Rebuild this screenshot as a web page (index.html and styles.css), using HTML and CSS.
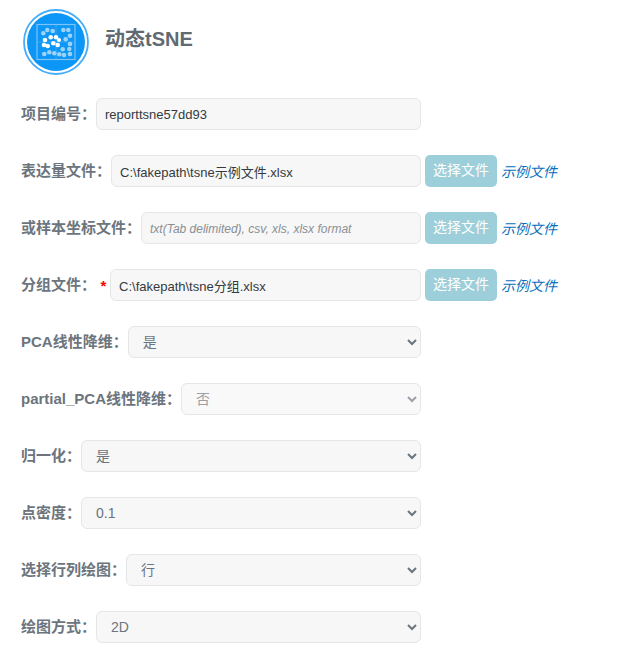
FILE: index.html
```html
<!DOCTYPE html>
<html lang="zh">
<head>
<meta charset="utf-8">
<title>动态tSNE</title>
<link rel="stylesheet" href="styles.css">
</head>
<body>
<header class="head">
<svg class="logo" viewBox="0 0 68 68" width="68" height="68">
<circle cx="34" cy="34" r="32" fill="#fff" stroke="#45adf8" stroke-width="1.800"/>
<circle cx="34" cy="34" r="29" fill="#0c96f5"/>
<rect x="15" y="16.500" width="38" height="35" fill="none" stroke="#7cc4f8" stroke-width="1.200"/>
<path d="M34 17v34M15 34h38" stroke="#4fb0f7" stroke-width="0.700"/>
<g fill="#fff">
<circle cx="23" cy="32" r="2.300"/><circle cx="28.700" cy="29.300" r="2.300"/><circle cx="34" cy="29.300" r="2.300"/><circle cx="22" cy="37" r="2.300"/><circle cx="25.700" cy="38" r="2.300"/><circle cx="31.300" cy="35.300" r="2.300"/><circle cx="35.700" cy="37" r="2.300"/><circle cx="37" cy="32" r="2.100"/>
</g>
<g fill="#9bd3fa">
<circle cx="21.300" cy="25.300" r="2.300"/><circle cx="25.300" cy="22" r="2.300"/><circle cx="30.700" cy="23" r="2.300"/><circle cx="41.300" cy="22" r="2.300"/><circle cx="46.300" cy="22" r="2.300"/><circle cx="48" cy="27.700" r="2.300"/><circle cx="43.700" cy="31.300" r="2.300"/><circle cx="40.700" cy="41.300" r="2.300"/><circle cx="48" cy="36" r="2.300"/><circle cx="47.300" cy="41" r="2.300"/><circle cx="48" cy="46" r="2.300"/><circle cx="42" cy="47" r="2.300"/><circle cx="22.300" cy="46" r="2.300"/><circle cx="27.300" cy="44.300" r="2.300"/><circle cx="32.300" cy="45.300" r="2.300"/><circle cx="37.300" cy="46.300" r="2.300"/>
</g>
</svg>
<h1 class="title">动态tSNE</h1>
</header>
<form class="form">
<div class="row"><div class="main"><label class="lbl">项目编号：</label><input class="ctl" type="text" value="reporttsne57dd93"></div></div>
<div class="row"><div class="main"><label class="lbl">表达量文件：</label><input class="ctl" type="text" value="C:\fakepath\tsne示例文件.xlsx"></div><span class="btn">选择文件</span><a class="ex" href="#">示例文件</a></div>
<div class="row"><div class="main"><label class="lbl">或样本坐标文件：</label><input class="ctl" type="text" placeholder="txt(Tab delimited), csv, xls, xlsx format"></div><span class="btn">选择文件</span><a class="ex" href="#">示例文件</a></div>
<div class="row"><div class="main"><label class="lbl">分组文件：</label><span class="req">*</span><input class="ctl" type="text" value="C:\fakepath\tsne分组.xlsx"></div><span class="btn">选择文件</span><a class="ex" href="#">示例文件</a></div>
<div class="row"><div class="main"><label class="lbl">PCA线性降维：</label><select class="ctl sel"><option>是</option></select></div></div>
<div class="row"><div class="main"><label class="lbl">partial_PCA线性降维：</label><select class="ctl sel" disabled><option>否</option></select></div></div>
<div class="row"><div class="main"><label class="lbl">归一化：</label><select class="ctl sel"><option>是</option></select></div></div>
<div class="row"><div class="main"><label class="lbl">点密度：</label><select class="ctl sel"><option>0.1</option></select></div></div>
<div class="row"><div class="main"><label class="lbl">选择行列绘图：</label><select class="ctl sel"><option>行</option></select></div></div>
<div class="row"><div class="main"><label class="lbl">绘图方式：</label><select class="ctl sel"><option>2D</option></select></div></div>
</form>
</body>
</html>
```
FILE: styles.css
```css
* { box-sizing: border-box; }
html, body { margin: 0; padding: 0; overflow: hidden; }
body {
  width: 629px;
  height: 658px;
  background: #fff;
  font-family: "Liberation Sans", "Noto Sans CJK SC", sans-serif;
  font-size: 14px;
  color: #495057;
}
.head { display: flex; align-items: flex-start; padding: 8px 0 0 22px; height: 84px; }
.logo { flex: none; }
.title { margin: 17px 0 0 15px; font-size: 20px; line-height: 28px; font-weight: 700; color: #5f6a72; }
.form { display: flex; flex-direction: column; gap: 25px; padding: 14px 0 0 21px; }
.row { display: flex; align-items: center; height: 32px; }
.main { display: flex; align-items: center; flex: none; width: 400px; }
.lbl { flex: none; font-weight: 700; font-size: 15px; line-height: 32px; color: #6c757d; }
.req { flex: none; color: #f00; font-weight: 700; font-size: 15px; width: 14px; text-align: center; padding-left: 1px; }
.ctl {
  flex: 1 1 0;
  min-width: 0;
  height: 32px;
  border: 1px solid #e5e6e7;
  border-radius: 6px;
  background-color: #f7f7f7;
  padding: 0 8px;
  font-family: inherit;
  font-size: 13px;
  color: #343a40;
}
.ctl::placeholder { font-style: italic; font-size: 12px; color: #8a8f94; }
.sel { font-size: 14px; color: #6c757d; padding-left: 10px; }
.sel:disabled { color: #9aa0a5; opacity: 1; background-color: #f9f9f9; }
.btn {
  flex: none;
  width: 72px;
  height: 32px;
  margin-left: 4px;
  line-height: 30px;
  text-align: center;
  background: #9dcfdb;
  color: #fff;
  border-radius: 5px;
  font-size: 14px;
}
.ex { flex: none; margin-left: 4px; padding-bottom: 1px; color: #0a6ebd; font-style: italic; font-size: 14px; text-decoration: none; }
```
